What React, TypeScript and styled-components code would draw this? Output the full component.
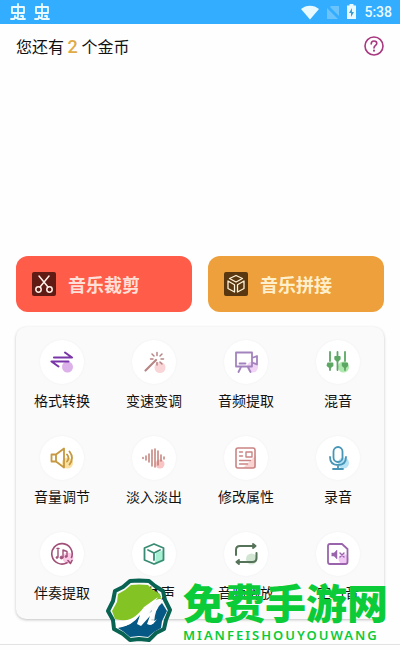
import React from "react";
import styled, { createGlobalStyle } from "styled-components";

const GlobalStyle = createGlobalStyle`
  *, *::before, *::after { box-sizing: border-box; }
  body {
    margin: 0;
    background: #fff;
    color: #111;
    font-family: "Noto Sans CJK SC", "Noto Sans", sans-serif;
  }
  button { font: inherit; color: inherit; border: 0; background: none; padding: 0; cursor: pointer; }
`;

const Page = styled.div`
  min-height: 100vh;
  background: #fefefe;
`;

const StatusBar = styled.header`
  display: flex;
  align-items: center;
  justify-content: space-between;
  height: 24px;
  padding: 0 8px 0 10px;
  background: #33adff;
  color: #e9faff;
`;

const StatusGroup = styled.div<{ $gap: number }>`
  display: flex;
  align-items: center;
  gap: ${(p) => p.$gap}px;
`;

const Clock = styled.time`
  font: 500 14px/24px Roboto, sans-serif;
`;

const CoinBar = styled.div`
  display: flex;
  align-items: center;
  justify-content: space-between;
  height: 44px;
  padding: 0 16px;
`;

const CoinText = styled.p`
  margin: 0;
  font-size: 16px;
  line-height: 24px;
`;

const CoinCount = styled.span`
  color: #e0aa45;
  font-family: Roboto, sans-serif;
  font-size: 18px;
  font-weight: 500;
`;

const HelpButton = styled.button`
  display: flex;
  color: #a8387f;
`;

const Main = styled.main`
  padding: 188px 16px 0;
`;

const Actions = styled.div`
  display: grid;
  grid-template-columns: 1fr 1fr;
  gap: 16px;
`;

const ActionButton = styled.button<{ $tone: string; $ink: string }>`
  display: flex;
  align-items: center;
  gap: 12px;
  height: 56px;
  padding: 0 16px;
  border-radius: 12px;
  background: ${(p) => p.$tone};
  color: ${(p) => p.$ink};
  font-size: 18px;
  font-weight: 700;
  line-height: 24px;
`;

const ActionIcon = styled.span<{ $tone: string }>`
  display: flex;
  align-items: center;
  justify-content: center;
  width: 24px;
  height: 24px;
  border-radius: 2px;
  background: ${(p) => p.$tone};
`;

const ToolCard = styled.section`
  position: relative;
  margin-top: 15px;
  padding: 13px 0 15px;
  border-radius: 10px;
  background: #fafafa;
  box-shadow: 0 1px 3px rgba(0, 0, 0, 0.24);
`;

const ToolGrid = styled.div`
  display: grid;
  grid-template-columns: repeat(4, 1fr);
  row-gap: 24px;
`;

const ToolButton = styled.button`
  display: flex;
  flex-direction: column;
  align-items: center;
  gap: 4px;
  font-size: 14px;
  line-height: 24px;
`;

const ToolDisc = styled.span`
  display: flex;
  align-items: center;
  justify-content: center;
  width: 44px;
  height: 44px;
  border-radius: 50%;
  background: #fff;
  box-shadow: 0 0 2px rgba(120, 130, 200, 0.1);
`;

const Watermark = styled.div`
  position: absolute;
  right: -4px;
  bottom: -25px;
  display: flex;
  align-items: center;
  gap: 10px;
  color: #0bcb38;
  pointer-events: none;
`;

const WatermarkText = styled.div`
  display: flex;
  flex-direction: column;
  gap: 4px;
`;

const WatermarkName = styled.strong`
  font-size: 41px;
  font-weight: 900;
  line-height: 44px;
`;

const WatermarkLatin = styled.span`
  font: 600 13px/16px "Noto Sans", sans-serif;
  letter-spacing: 2px;
`;

const BottomRule = styled.hr`
  margin: 25px 0 0;
  border: 0;
  border-top: 1px solid #e2e2e2;
`;

const BugIcon = () => (
  <svg width="16" height="18" viewBox="0 0 16 18" fill="none" stroke="currentColor" strokeWidth="1.8" strokeLinejoin="round" strokeLinecap="round">
    <path d="M2 4h12v6H2zM8 1v12q0 2-2 2M1 16h3q1-1 1-3M11 13h2v3h2M8 16h5" />
  </svg>
);

const WifiIcon = () => (
  <svg width="18" height="15" viewBox="0 0 18 15" fill="currentColor">
    <path d="M0 4C5-.5 13-.5 18 4L9 14.500z" />
  </svg>
);

const NoSimIcon = () => (
  <svg width="12" height="14" viewBox="0 0 12 14">
    <path d="M4 1h8v10L3 2zM0 3l11 11H0z" fill="#6bc3fc" />
  </svg>
);

const BatteryIcon = () => (
  <svg width="9" height="16" viewBox="0 0 9 16">
    <path d="M2.500 0h4v1.500H9V15H0V1.500h2.500z" fill="currentColor" />
    <path d="M5 4 2 9h2v4l3-5H5z" fill="#3c9ed2" />
  </svg>
);

const HelpIcon = () => (
  <svg width="20" height="20" viewBox="0 0 20 20" fill="none" stroke="currentColor" strokeWidth="1.6" strokeLinecap="round">
    <circle cx="10" cy="10" r="9" />
    <path d="M7.200 8q0-3 2.800-3t2.800 2.500C12.800 9.500 10 9.500 10 12" />
    <path d="M10 14.500v.2" strokeWidth="2" />
  </svg>
);

const ScissorsIcon = () => (
  <svg width="20" height="20" viewBox="0 0 20 20" fill="none" stroke="#fff0e8" strokeWidth="1.5" strokeLinecap="round">
    <circle cx="4.500" cy="15.500" r="2.700" />
    <circle cx="15.500" cy="15.500" r="2.700" />
    <path d="M5 2l9 11M15 2 6 13" />
  </svg>
);

const CubesIcon = () => (
  <svg width="20" height="20" viewBox="0 0 20 20" fill="none" stroke="#fff3d8" strokeWidth="1.3" strokeLinejoin="round">
    <path d="M10 1.500 16.500 4.500 10 8 3.500 4.500zM2 7l6.500 3.700V18L2 14.500zM18 7l-6.500 3.700V18l6.500-3.500z" />
  </svg>
);

const ToolSvg = ({ ink, children }: { ink: string; children: React.ReactNode }) => (
  <svg width="24" height="24" viewBox="0 0 24 24" fill="none" stroke={ink} strokeWidth="1.8" strokeLinecap="round" strokeLinejoin="round">
    {children}
  </svg>
);

const Blot = ({ fill, cx = 17.5, cy = 17, r = 5.5 }: { fill: string; cx?: number; cy?: number; r?: number }) => (
  <circle cx={cx} cy={cy} r={r} fill={fill} stroke="none" />
);

const tools: { label: string; icon: React.ReactNode }[] = [
  {
    label: "格式转换",
    icon: (
      <ToolSvg ink="#7a36a8">
        <Blot fill="#dcb0e8" />
        <path d="M4 7.500h18L15 2.500M18.500 11.500H1.500L8.500 16.500" strokeWidth="2.100" />
      </ToolSvg>
    ),
  },
  {
    label: "变速变调",
    icon: (
      <ToolSvg ink="#b88585">
        <Blot fill="#f9d5d7" cx={18} cy={17.5} />
        <path d="M3.500 20.500 14 10" strokeWidth="2.200" />
        <path d="M15 2.500v3M10 4l2 2M8.500 9h2.500M20 4l-2 2M19 9h2.500M18 12l2 2M15 12.500v2.500" strokeWidth="1.500" />
      </ToolSvg>
    ),
  },
  {
    label: "音频提取",
    icon: (
      <ToolSvg ink="#a383bd">
        <Blot fill="#f1d3f5" cx={18.5} />
        <path d="M2 2.500h16v14H2zM18 8l5-2v8.500L18 12.500M5.500 13.500h6M7 17l-2.500 5M14 17l2.500 5" />
      </ToolSvg>
    ),
  },
  {
    label: "混音",
    icon: (
      <ToolSvg ink="#5da764">
        <Blot fill="#aee8ae" />
        <path d="M4 2v9M4 18v2M11.500 2v4M11.500 11v9M19 2v9M19 18v2" strokeWidth="1.800" />
        <path d="M2 13.500h4.500v2L4 17.500l-2.500-2zM9.200 7h4.500v2l-2.200 2-2.300-2zM16.700 13.500h4.500v2L19 17.500l-2.300-2z" fill="#5da764" />
      </ToolSvg>
    ),
  },
  {
    label: "音量调节",
    icon: (
      <ToolSvg ink="#c6983f">
        <Blot fill="#fae0a0" />
        <path d="M1.500 8.500H6l8-6v19l-8-6H1.500zM6 8.500v7M17 8.500q3 3.500 0 7M19.500 5.500q5 6.500 0 13" />
      </ToolSvg>
    ),
  },
  {
    label: "淡入淡出",
    icon: (
      <ToolSvg ink="#b86d65">
        <Blot fill="#f8c5c4" cx={18} cy={18} r={4.5} />
        <path d="M1 11.500v1M4 10v4M7 8v8M10 4v16M13 3v18M16 5v14M19 9v6M22 11v2" strokeWidth="1.300" />
      </ToolSvg>
    ),
  },
  {
    label: "修改属性",
    icon: (
      <ToolSvg ink="#ca8584">
        <path d="M22 9v13H9z" fill="#f8d3d1" stroke="none" />
        <rect x="2" y="2" width="19" height="20" rx="2" strokeWidth="1.600" />
        <path d="M12 6h6v5h-6zM5.500 6h3M5.500 10h3M5.500 14.500h11M5.500 18h8" strokeWidth="1.400" />
      </ToolSvg>
    ),
  },
  {
    label: "录音",
    icon: (
      <ToolSvg ink="#4796b8">
        <Blot fill="#b6e2f5" />
        <rect x="7.500" y="1" width="9" height="15" rx="4.500" />
        <path d="M4 11q0 8 8 8t8-8M12 19v4M7 23h10" />
      </ToolSvg>
    ),
  },
  {
    label: "伴奏提取",
    icon: (
      <ToolSvg ink="#a05078">
        <Blot fill="#fac8e5" cx={18} cy={16} />
        <path d="M17 20.700A10.200 10.200 0 1 1 21.500 15.500M18 18.500l2.500 3 1.500-3" strokeWidth="1.600" />
        <path d="M13 15.500V8l4 1.500v5M8 8v7M7 6.500h2" strokeWidth="1.400" />
        <path d="M13 15.500a1.500 1.500 0 1 1-1.500-1.500zM17 14.500a1 1 0 1 1-1-1zM8 15.500a1 1 0 1 1-1-1z" fill="#a05078" strokeWidth="0.800" />
      </ToolSvg>
    ),
  },
  {
    label: "立体声",
    icon: (
      <ToolSvg ink="#398c73">
        <path d="M14 11 22 8v11l-9 4z" fill="#a8f0d4" stroke="none" />
        <path d="m12 2 9.500 4v12L12 22l-9.500-4V6zM6 8l6 3 6-3M12 11v7" />
      </ToolSvg>
    ),
  },
  {
    label: "音频倒放",
    icon: (
      <ToolSvg ink="#547358">
        <Blot fill="#d1e5d2" />
        <path d="M2 13V8q0-4 4-4h15M19 2l2.500 2L19 6M22.500 11v5q0 4-4 4H3M5 18l-2.500 2L5 22" strokeWidth="2" />
      </ToolSvg>
    ),
  },
  {
    label: "空白音",
    icon: (
      <ToolSvg ink="#9a64ac">
        <Blot fill="#f1c8f5" cy={17} r={5} />
        <path d="M4 2h12l5.500 5v13q0 2-2 2H4q-2 0-2-2V4q0-2 2-2z" />
        <path d="M6 11h2l3-3v9l-3-3H6z" fill="#9a64ac" strokeWidth="0.500" />
        <path d="m14 11 4 4M18 11l-4 4" strokeWidth="1.400" />
      </ToolSvg>
    ),
  },
];

const WatermarkLogo = () => (
  <svg width="68" height="66" viewBox="0 0 68 66">
    <path d="M25 3 34 2.500 44 3 50 8 58 13 60 22 65 32 61 42 59 51 51 55 44 62 34 61 25 62 18 56 9 51 8 42 3 33 8 23 10 13 18 9Z" fill="none" stroke="#086353" strokeWidth="4" strokeLinejoin="round" />
    <path d="M26 7 34 6.500 43 7 48 12 55 16 56 21Q50 20 43 28L31 40Q23 44 10 41L7 33 12 24 13 16 20 12z" fill="#83c424" />
    <path d="M13 50Q30 47 37 32l-1 14 11-14-4 14q3 2 6-1 1-15 8-20l5 8-5 10-1 7-7 4-6 5-9-1-9 1-6-5z" fill="#075985" />
    <path d="M10 43q18 2 29-14L53 19 40 38l13-9-7 13q2 3 6-1-5 8-10 5l3-8-9 10-4-2 3-9Q26 49 14 49z" fill="#fff" />
  </svg>
);

export default function App() {
  return (
    <>
      <GlobalStyle />
      <Page>
        <StatusBar>
          <StatusGroup $gap={8}>
            <BugIcon />
            <BugIcon />
          </StatusGroup>
          <StatusGroup $gap={8}>
            <WifiIcon />
            <NoSimIcon />
            <BatteryIcon />
            <Clock>5:38</Clock>
          </StatusGroup>
        </StatusBar>
        <CoinBar>
          <CoinText>
            您还有 <CoinCount>2</CoinCount> 个金币
          </CoinText>
          <HelpButton type="button" aria-label="帮助">
            <HelpIcon />
          </HelpButton>
        </CoinBar>
        <Main>
          <Actions>
            <ActionButton type="button" $tone="#ff5c49" $ink="#ffe0d8">
              <ActionIcon $tone="#601b14">
                <ScissorsIcon />
              </ActionIcon>
              音乐裁剪
            </ActionButton>
            <ActionButton type="button" $tone="#eda03b" $ink="#fff0cd">
              <ActionIcon $tone="#593710">
                <CubesIcon />
              </ActionIcon>
              音乐拼接
            </ActionButton>
          </Actions>
          <ToolCard>
            <ToolGrid>
              {tools.map((tool) => (
                <ToolButton type="button" key={tool.label}>
                  <ToolDisc>{tool.icon}</ToolDisc>
                  {tool.label}
                </ToolButton>
              ))}
            </ToolGrid>
            <Watermark>
              <WatermarkLogo />
              <WatermarkText>
                <WatermarkName>免费手游网</WatermarkName>
                <WatermarkLatin>MIANFEISHOUYOUWANG</WatermarkLatin>
              </WatermarkText>
            </Watermark>
          </ToolCard>
        </Main>
        <BottomRule />
      </Page>
    </>
  );
}
